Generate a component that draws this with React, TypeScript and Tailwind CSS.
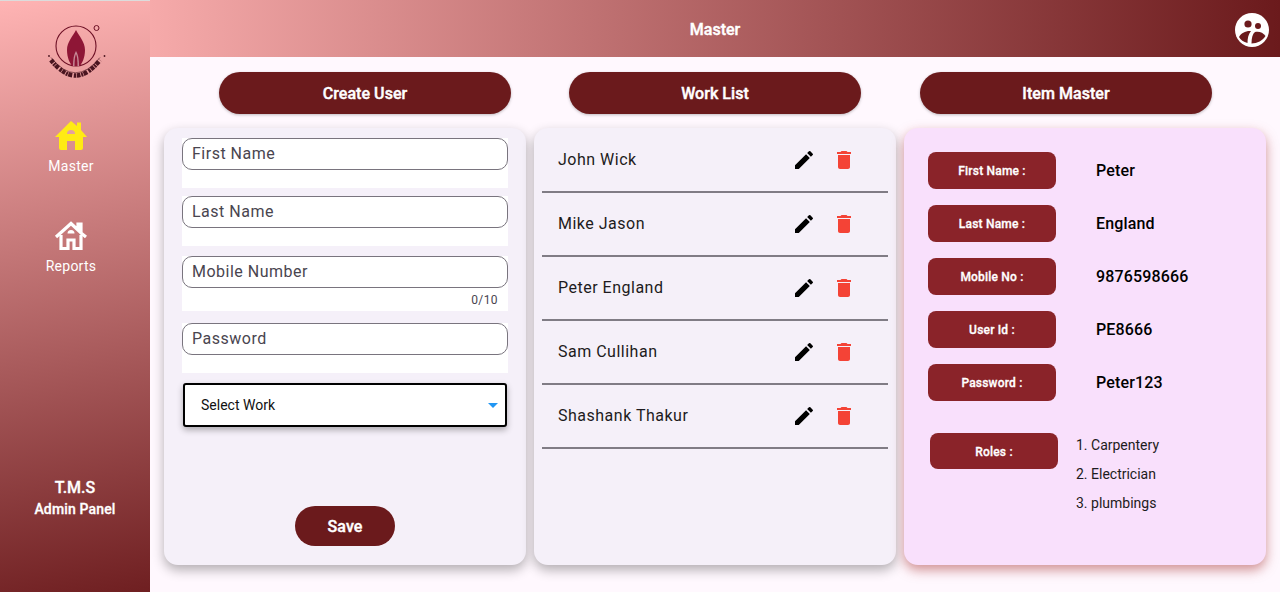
import { MdEdit, MdDelete } from 'react-icons/md';

const workers = ['John Wick', 'Mike Jason', 'Peter England', 'Sam Cullihan', 'Shashank Thakur'];

const details = [
  { label: 'First Name :', value: 'Peter' },
  { label: 'Last Name :', value: 'England' },
  { label: 'Mobile No :', value: '9876598666' },
  { label: 'User Id :', value: 'PE8666' },
  { label: 'Password :', value: 'Peter123' },
];

const roles = ['1. Carpentery', '2. Electrician', '3. plumbings'];

function HomeFilled({ className }: { className: string }) {
  return (
    <svg viewBox="0 0 32 29" className={className} fill="currentColor">
      <path d="M16 0 L22 5 V1.5 H26 V9 L32 16 H28 V27 Q28 29 26 29 H20 V20 H12 V29 H6 Q4 29 4 27 V16 H0 Z" />
      <path d="M12 13 A4 4 0 0 1 20 13 Z" fill="#e3a0a0" />
    </svg>
  );
}

function HomeOutline({ className }: { className: string }) {
  return (
    <svg viewBox="0 0 34 29" className={className} fill="none" stroke="currentColor" strokeWidth="3.2">
      <path d="M2 16 L17 2.5 L24 9 V3 H27 V12 L32 16" />
      <path d="M7 14 V27.5 H14 V19 H20 V27.5 H27 V14" />
      <path d="M13.5 12.5 A3.5 3.5 0 0 1 20.5 12.5 Z" fill="currentColor" stroke="none" />
    </svg>
  );
}

function Logo() {
  return (
    <svg viewBox="0 0 66 60" className="w-[66px] h-[60px]">
      <circle cx="32" cy="24" r="20" fill="none" stroke="#6d1025" strokeWidth="1.1" />
      <path d="M32 8 C35 14 41 20 41 28 C41 36 38 41 36 44 H28 C26 41 23 36 23 28 C23 20 29 14 32 8 Z" fill="#8e1636" />
      <path d="M32 29 C34 32 35 37 35 44 H29 C29 37 30 32 32 29 Z" fill="#c78a97" />
      <path d="M32 32 C33 34 33.5 38 33.5 44 H30.5 C30.5 38 31 34 32 32 Z" fill="#8e1636" />
      <circle cx="52.5" cy="6" r="2.5" fill="none" stroke="#6d1025" strokeWidth="1" />
      <path d="M7 38 Q31.5 69 56 38" fill="none" stroke="#4a1520" strokeWidth="4.5" strokeDasharray="3.5 0.8 2 0.6 4 1.6 2.5 0.7" />
      <path d="M7 35.5 Q31.5 66 56 35.5" fill="none" stroke="#4a1520" strokeWidth="0.6" />
      <circle cx="5" cy="34" r="0.9" fill="#4a1520" />
      <circle cx="60.5" cy="34" r="0.9" fill="#4a1520" />
    </svg>
  );
}

function Field({ label, counter, className }: { label: string; counter?: string; className: string }) {
  return (
    <div className={`bg-white ${className}`}>
      <div className="h-[32px] rounded-[10px] border border-[#79747e] px-[9px] flex items-center text-[16px] tracking-[0.5px] text-[#49454f]">
        {label}
      </div>
      {counter && <div className="mt-[4px] pr-[10px] text-right text-[12px] leading-[16px] tracking-[0.4px] text-[#49454f]">{counter}</div>}
    </div>
  );
}

export default function App() {
  return (
    <div className="relative flex h-[592px] w-[1280px] overflow-hidden bg-[#fff8fe] font-['Roboto',sans-serif]">
      <div className="absolute inset-x-0 top-0 h-px bg-[#dcdcdc]" />

      {/* Sidebar */}
      <div className="w-[150px] h-full shrink-0 flex flex-col items-center bg-[linear-gradient(170deg,#ffb4b4_0%,#6f1f21_100%)] text-white">
        <div className="mt-[22px] ml-[3px]">
          <Logo />
        </div>
        <div className="mt-[39px] mr-[8px] flex flex-col items-center text-[#ffeb14]">
          <HomeFilled className="w-[32px] h-[29px]" />
          <span className="mt-[6px] text-[14px] leading-[20px] tracking-[0.25px] text-white">Master</span>
        </div>
        <div className="mt-[45px] mr-[8px] flex flex-col items-center">
          <HomeOutline className="w-[34px] h-[29px]" />
          <span className="mt-[6px] text-[14px] leading-[20px] tracking-[0.25px]">Reports</span>
        </div>
        <div className="mt-auto mb-[73px] flex flex-col items-center font-medium [-webkit-text-stroke:0.3px_white]">
          <span className="text-[16px] leading-[22px]">T.M.S</span>
          <span className="text-[14px] leading-[20px] tracking-[0.15px]">Admin Panel</span>
        </div>
      </div>

      <div className="flex-1 min-w-0 flex flex-col">
        {/* Header */}
        <div className="relative h-[57px] shrink-0 flex items-center justify-center pt-[2px] bg-[linear-gradient(90deg,#f6aaaa_0%,#6b1a1c_100%)]">
          <span className="text-[16px] font-medium text-white [-webkit-text-stroke:0.4px_white]">Master</span>
          <svg viewBox="0 0 34 34" className="absolute right-[11px] top-[13px] w-[34px] h-[34px]">
            <circle cx="17" cy="17" r="17" fill="#fff" />
            <circle cx="13" cy="11" r="3.6" fill="#6b1a1c" />
            <circle cx="23" cy="13" r="3" fill="#6b1a1c" />
            <path d="M4 24 C6 20 11 17.5 16 18 C13.5 21 12.5 25 12.5 30 C8.5 29 5.5 27 4 24 Z" fill="#6b1a1c" />
            <path d="M16.5 30.5 C16.5 25 17.5 21 20 19 C24 18 28 19.5 30.5 23 C28 27.5 22 30.5 16.5 30.5 Z" fill="#6b1a1c" />
          </svg>
        </div>

        {/* Tabs */}
        <div className="mt-[15px] pl-[69px] flex gap-[58px]">
          {['Create User', 'Work List'].map((name) => (
            <button key={name} className="w-[292px] h-[42px] pt-[2px] rounded-full bg-[#6b1a1c] text-white text-[16px] font-medium tracking-[0.05px] [-webkit-text-stroke:0.4px_white] shadow-[0_1px_3px_rgba(0,0,0,0.25)]">
              {name}
            </button>
          ))}
          <button className="ml-px w-[292px] h-[42px] pt-[2px] rounded-full bg-[#6b1a1c] text-white text-[16px] font-medium tracking-[0.05px] [-webkit-text-stroke:0.4px_white] shadow-[0_1px_3px_rgba(0,0,0,0.25)]">
            Item Master
          </button>
        </div>

        {/* Cards */}
        <div className="mt-[14px] px-[14px] grid grid-cols-3 gap-[8px] h-[437px]">
          <div className="rounded-[14px] bg-[#f5f0f9] px-[18px] pt-[10px] shadow-[0_5px_12px_rgba(0,0,0,0.3)]">
            <Field label="First Name" className="h-[50px]" />
            <Field label="Last Name" className="h-[50px] mt-[8px]" />
            <Field label="Mobile Number" counter="0/10" className="h-[55px] mt-[10px]" />
            <Field label="Password" className="h-[50px] mt-[12px]" />
            <div className="mt-[10px] mx-[1px] h-[44px] flex items-center justify-between rounded-[3px] border-2 border-black bg-white pl-[16px] pr-[7px] shadow-[0_3px_6px_rgba(0,0,0,0.3)]">
              <span className="text-[14px] text-[#111]">Select Work</span>
              <span className="w-0 h-0 border-x-[5px] border-x-transparent border-t-[5px] border-t-[#2196f3]" />
            </div>
            <div className="mt-[79px] flex justify-center">
              <button className="w-[100px] h-[40px] pt-[2px] rounded-full bg-[#6b1a1c] text-white text-[16px] font-medium tracking-[0.05px] [-webkit-text-stroke:0.4px_white]">Save</button>
            </div>
          </div>

          <div className="rounded-[14px] bg-[#f5f0f9] px-[8px] pt-px shadow-[0_5px_12px_rgba(0,0,0,0.3)]">
            {workers.map((name) => (
              <div key={name} className="h-[64px] flex items-center border-b-2 border-[#807c85] pl-[16px] pr-[32px]">
                <span className="flex-1 text-[16px] tracking-[0.5px] text-[#1d1b20]">{name}</span>
                <MdEdit className="w-[24px] h-[24px] text-black" />
                <MdDelete className="ml-[16px] w-[24px] h-[24px] text-[#f44336]" />
              </div>
            ))}
          </div>

          <div className="rounded-[14px] bg-[#f9e0fc] pl-[24px] pt-[24px] shadow-[0_5px_12px_rgba(170,60,60,0.55)]">
            <div className="flex flex-col gap-[16px]">
              {details.map((row) => (
                <div key={row.label} className="flex items-center">
                  <div className="w-[128px] h-[37px] rounded-[8px] bg-[#8a2329] flex items-center justify-center text-white text-[12px] font-medium tracking-[0.2px] [-webkit-text-stroke:0.3px_white]">
                    {row.label}
                  </div>
                  <span className="ml-[40px] text-[16px] font-medium tracking-[0.15px] text-black">{row.value}</span>
                </div>
              ))}
            </div>
            <div className="mt-[32px] ml-[2px] flex items-start">
              <div className="w-[128px] h-[36px] pt-[2px] rounded-[8px] bg-[#8a2329] flex items-center justify-center text-white text-[12px] font-medium tracking-[0.2px] [-webkit-text-stroke:0.3px_white]">
                Roles :
              </div>
              <div className="ml-[18px] mt-[2px] flex flex-col gap-[9px] text-[14px] leading-[20px] text-[#1d1b20]">
                {roles.map((role) => (
                  <span key={role}>{role}</span>
                ))}
              </div>
            </div>
          </div>
        </div>
      </div>
    </div>
  );
}
